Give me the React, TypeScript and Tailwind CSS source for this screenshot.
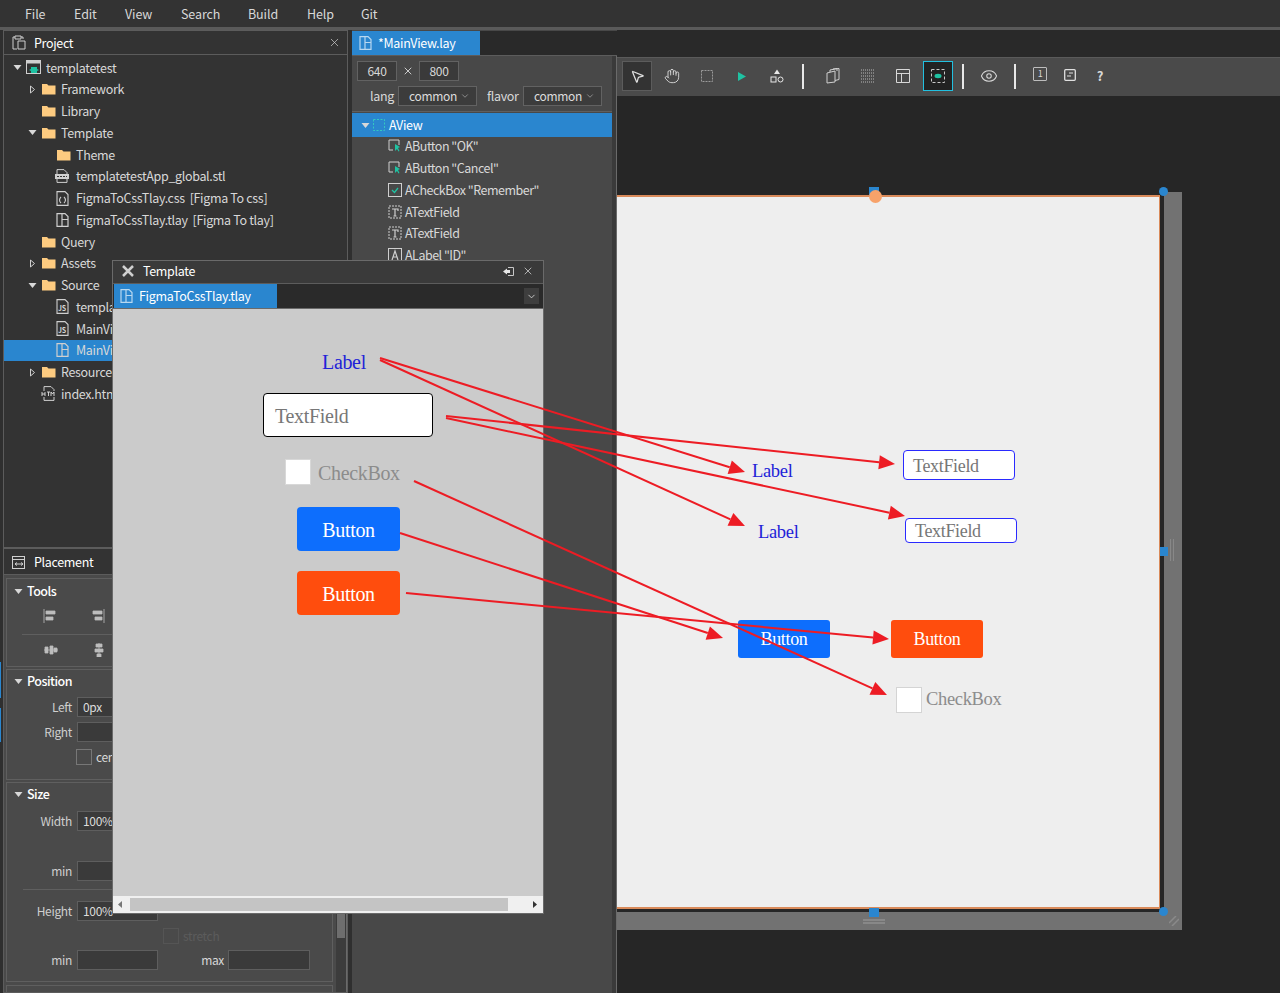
import React from "react";
import { Hand, MousePointer2, Eye, X, ChevronDown } from "lucide-react";

const C = "#cfcfcf";

function Tri({ open }: { open?: boolean }) {
  return open ? (
    <svg width="9" height="7" viewBox="0 0 9 7" className="shrink-0"><path d="M0.5 1h8L4.5 6z" fill="#d8d8d8" /></svg>
  ) : (
    <svg width="9" height="9" viewBox="0 0 9 9" className="shrink-0"><path d="M2.5 1v7L6.5 4.5z" fill="none" stroke="#d0d0d0" /></svg>
  );
}
function Folder() {
  return <svg width="14" height="12" viewBox="0 0 14 12" className="shrink-0 ml-[1px]"><path d="M0 1h5l1.5 1.6H13.500V11.500H0z" fill="#fdcb80" /></svg>;
}
function LayFile({ c = C }: { c?: string }) {
  return (
    <svg width="13" height="14" viewBox="0 0 13 14" className="shrink-0" fill="none" stroke={c} strokeWidth="1.200">
      <path d="M1 .6h8l3 3v9.800H1zM6 .6v12.800M6 6.500h6" />
    </svg>
  );
}
function JsFile() {
  return (
    <span className="relative w-[13px] h-[15px] shrink-0 block">
      <svg width="13" height="15" viewBox="0 0 13 15" fill="none" stroke={C} strokeWidth="1.100" className="absolute inset-0"><path d="M1 .6h8l3 3v10.800H1z" /></svg>
      <span className="absolute left-[2px] top-[5px] text-[7px] leading-[9px] font-bold text-[#d8d8d8]">JS</span>
    </span>
  );
}
function CssFile() {
  return (
    <svg width="13" height="15" viewBox="0 0 13 15" className="shrink-0" fill="none" stroke={C} strokeWidth="1.100">
      <path d="M1 .6h8l3 3v10.800H1zM5 6c-2 2-2 4 0 6M8 6c2 2 2 4 0 6" />
    </svg>
  );
}
function StlFile() {
  return (
    <svg width="14" height="14" viewBox="0 0 14 14" className="shrink-0 -ml-[1px]">
      <path d="M2 .6h7l3 3v9.800H2z" fill="none" stroke={C} />
      <rect x="0" y="5" width="14" height="5" fill={C} />
      <path d="M2 7.500h10" stroke="#333" strokeDasharray="2 1" />
    </svg>
  );
}
function HtmlFile() {
  return (
    <svg width="15" height="15" viewBox="0 0 15 15" className="shrink-0">
      <path d="M3 .6h7l3 3v10.800H3z" fill="none" stroke={C} />
      <rect x="0" y="5" width="15" height="6" fill="#333" />
      <path d="M1 6v4M1 8h3M4 6v4M6 6h3M7.500 6v4M10 10V6l1.500 2L13 6v4" stroke="#e0e0e0" fill="none" strokeWidth=".9" />
    </svg>
  );
}
function AppIcon() {
  return (
    <svg width="15" height="15" viewBox="0 0 15 15" className="shrink-0">
      <rect x=".5" y=".5" width="14" height="13" fill="none" stroke={C} />
      <rect x=".5" y=".5" width="14" height="3" fill={C} />
      <path d="M5 7h6v2l2 1-2 1v2H5v-2l-2-1 2-1z" fill="#1fc2a2" />
    </svg>
  );
}

type Row = { d: number; t: string; a?: "o" | "c"; i: React.ReactNode; sel?: boolean };
const rows: Row[] = [
  { d: 0, t: "templatetest", a: "o", i: <AppIcon /> },
  { d: 1, t: "Framework", a: "c", i: <Folder /> },
  { d: 1, t: "Library", i: <Folder /> },
  { d: 1, t: "Template", a: "o", i: <Folder /> },
  { d: 2, t: "Theme", i: <Folder /> },
  { d: 2, t: "templatetestApp_global.stl", i: <StlFile /> },
  { d: 2, t: "FigmaToCssTlay.css  [Figma To css]", i: <CssFile /> },
  { d: 2, t: "FigmaToCssTlay.tlay  [Figma To tlay]", i: <LayFile /> },
  { d: 1, t: "Query", i: <Folder /> },
  { d: 1, t: "Assets", a: "c", i: <Folder /> },
  { d: 1, t: "Source", a: "o", i: <Folder /> },
  { d: 2, t: "templatetestApp.js", i: <JsFile /> },
  { d: 2, t: "MainView.js", i: <JsFile /> },
  { d: 2, t: "MainView.lay", i: <LayFile />, sel: true },
  { d: 1, t: "Resource", a: "c", i: <Folder /> },
  { d: 1, t: "index.html", i: <HtmlFile /> },
];

function TreeRow({ r }: { r: Row }) {
  const left = r.d * 15 + 7;
  return (
    <div className={`h-[21.75px] flex items-center whitespace-pre ${r.sel ? "bg-[#2a86cf]" : ""}`}>
      <span className="w-[13px] flex justify-center shrink-0" style={{ marginLeft: left }}>
        {r.a === "o" ? <Tri open /> : r.a === "c" ? <Tri /> : null}
      </span>
      <span className="w-[20px] ml-[2px] flex justify-start shrink-0">{r.i}</span>
      <span>{r.t}</span>
    </div>
  );
}

function PanelHead({ title, icon, close, h = "h-[24px]" }: { title: string; icon: React.ReactNode; close?: boolean; h?: string }) {
  return (
    <div className={`${h} flex items-center pl-[8px] pr-[6px] border-b border-[#5c5c5c] shrink-0 text-white`}>
      <span className="w-[22px] flex">{icon}</span>
      <span>{title}</span>
      {close && <X size={13} strokeWidth={1.300} className="ml-auto text-[#d0d0d0]" />}
    </div>
  );
}

function Input({ v, w = "w-[81px]" }: { v?: string; w?: string }) {
  return <div className={`${w} h-[20px] bg-[#3a3a3a] border border-[#5e5e5e] text-[12px] leading-[18px] pl-[5px] text-[#dcdcdc] shrink-0`}>{v}</div>;
}

function Field({ label, v }: { label: string; v?: string }) {
  return (
    <div className="flex items-center h-[20px]">
      <span className="w-[65px] text-right text-[12px] mr-[5px] text-[#cfcfcf]">{label}</span>
      <Input v={v} />
    </div>
  );
}

function GroupHead({ t }: { t: string }) {
  return (
    <div className="flex items-center h-[20px] pl-[7px] gap-[4px] text-white font-medium">
      <Tri open />
      <span className="tracking-[-0.5px]">{t}</span>
    </div>
  );
}

function AlignIcon({ k }: { k: number }) {
  const p = [
    "M1 0v14M3 2h9v3H3zM3 8h7v3H3z",
    "M13 0v14M2 2h9v3H2zM4 8h7v3H4z",
    "M1 4h3v6H1zM6 3h3v8H6zM10 5h3v4h-3zM0 7h14",
    "M4 1h6v3H4zM3 6h8v3H3zM5 11h4v3H5zM7 0v14",
  ][k];
  return <svg width="14" height="14" viewBox="0 0 14 14"><path d={p} fill="#bdbdbd" stroke="#bdbdbd" strokeWidth=".8" /></svg>;
}

function CtrlIcon({ k }: { k: number }) {
  const teal = "#1fc2a2";
  return (
    <svg width="14" height="14" viewBox="0 0 14 14" className="shrink-0">
      {k === 0 && <><path d="M5 11H1V1h10v5" fill="none" stroke={C} /><path d="M7 5l5 3-2 1 1.500 3-1 .5L9 10l-2 2z" fill={teal} /></>}
      {k === 1 && <><rect x=".5" y=".5" width="13" height="13" fill="none" stroke={C} /><path d="M4 7l2.500 2.500L10 5" fill="none" stroke={teal} strokeWidth="1.300" /></>}
      {k === 2 && <><rect x="1" y="1" width="12" height="12" fill="none" stroke={C} strokeDasharray="2 1" /><path d="M4 4h6v2M7 4v7M5.500 11h3" fill="none" stroke={C} strokeWidth="1.200" /></>}
      {k === 3 && <><rect x=".5" y=".5" width="13" height="13" fill="none" stroke={C} /><path d="M4 12L7 3l3 9M5 9h4" fill="none" stroke={C} strokeWidth="1.200" /></>}
    </svg>
  );
}

function OutRow({ k, t }: { k: number; t: string }) {
  return (
    <div className="h-[21.75px] flex items-center pl-[36px] gap-[3px] whitespace-pre">
      <CtrlIcon k={k} />
      <span className="tracking-[-0.5px]">{t}</span>
    </div>
  );
}

function Sep() {
  return <div className="w-[2px] h-[25px] bg-[#e8e8e8] mx-[9px] shrink-0" />;
}
function Tool({ children, w = "w-[35px]" }: { children: React.ReactNode; w?: string }) {
  return <div className={`${w} h-[30px] flex items-center justify-center shrink-0`}>{children}</div>;
}

function Select({ w }: { w: string }) {
  return (
    <div className={`${w} h-[20px] border border-[#626262] bg-[#3c3c3c] flex items-center pl-[10px] gap-[3px] text-[12px] text-[#dcdcdc] shrink-0`}>
      <span>common</span>
      <ChevronDown size={10} className="text-[#999]" />
    </div>
  );
}

const ser = "font-['Liberation_Serif',serif]";

const arrows = [
  [380, 358, 745, 472],
  [380, 360, 745, 526],
  [446, 416, 895, 464],
  [446, 418, 905, 516],
  [414, 481, 887, 695],
  [400, 533, 723, 638],
  [406, 593, 889, 639],
];

function Arrows() {
  return (
    <svg width="1280" height="993" className="absolute left-0 top-0 pointer-events-none">
      {arrows.map(([x1, y1, x2, y2], i) => {
        const a = Math.atan2(y2 - y1, x2 - x1);
        const L = 16, W = 7;
        const bx = x2 - L * Math.cos(a), by = y2 - L * Math.sin(a);
        const px = -Math.sin(a) * W, py = Math.cos(a) * W;
        return (
          <g key={i}>
            <line x1={x1} y1={y1} x2={bx} y2={by} stroke="#ed1c24" strokeWidth="2" />
            <polygon points={`${x2},${y2} ${bx + px},${by + py} ${bx - px},${by - py}`} fill="#ed1c24" />
          </g>
        );
      })}
    </svg>
  );
}

function Handle({ cls }: { cls: string }) {
  return <div className={`absolute bg-[#2a86cf] ${cls}`} />;
}

function FloatingWindow() {
  return (
    <div className="absolute left-[112px] top-[260px] w-[432px] h-[654px] border border-[#6a6a6a] flex flex-col bg-[#cbcbcb]">
      <div className="h-[23px] bg-[#3a3a3a] border-b border-[#5c5c5c] flex items-center pl-[9px] pr-[9px] pb-[2px] text-white shrink-0">
        <svg width="12" height="12" viewBox="0 0 12 12" className="mr-[9px]"><path d="M1 1l10 10M11 1L1 11" stroke="#d0d0d0" strokeWidth="2.500" /></svg>
        <span>Template</span>
        <svg width="11" height="9" viewBox="0 0 11 9" className="ml-auto mr-[8px]"><path d="M5 .5h5.500v8H5" fill="none" stroke="#c8c8c8" /><path d="M0 4.500L4 1.500V3h3v3H4v1.500z" fill="#e8e8e8" /></svg>
        <X size={12} strokeWidth={1.500} className="text-[#d8d8d8]" />
      </div>
      <div className="h-[25px] bg-[#2a2a2a] flex shrink-0 border-b border-[#6a6a6a]">
        <div className="w-[163px] ml-[1px] bg-[#2a86cf] flex items-center pl-[6px] gap-[6px] text-white">
          <LayFile c="#b8d8f0" />
          <span>FigmaToCssTlay.tlay</span>
        </div>
        <div className="ml-auto mr-[4px] my-[4px] w-[15px] bg-[#3e3e3e] flex items-center justify-center">
          <ChevronDown size={11} className="text-[#d0d0d0]" />
        </div>
      </div>
      <div className="relative flex-1">
        <span className={`absolute left-[209px] top-[41px] text-[20px] leading-[24px] text-[#2222d8] ${ser}`}>Label</span>
        <div className={`absolute left-[150px] top-[84px] w-[170px] h-[44px] bg-white border border-black rounded-[4px] pl-[11px] text-[20px] leading-[44px] text-[#777] ${ser}`}>TextField</div>
        <div className="absolute left-[172px] top-[150px] w-[26px] h-[26px] bg-white border border-[#d8d8d8]" />
        <span className={`absolute left-[205px] top-[152px] text-[20px] leading-[24px] text-[#8c8c8c] ${ser}`}>CheckBox</span>
        <div className={`absolute left-[184px] top-[198px] w-[103px] h-[44px] bg-[#0d6efd] rounded-[4px] flex items-center justify-center pt-[2px] text-white text-[20px] ${ser}`}>Button</div>
        <div className={`absolute left-[184px] top-[262px] w-[103px] h-[44px] bg-[#ff4d0d] rounded-[4px] flex items-center justify-center pt-[2px] text-white text-[20px] ${ser}`}>Button</div>
      </div>
      <div className="h-[17px] bg-[#f0f0f0] flex items-center shrink-0">
        <svg width="17" height="9" viewBox="0 0 17 9"><path d="M9 1v7L5 4.500z" fill="#777" /></svg>
        <div className="w-[378px] h-[13px] bg-[#c4c4c4]" />
        <svg width="35" height="9" viewBox="0 0 35 9"><path d="M25 1v7l4-3.500z" fill="#333" /></svg>
      </div>
    </div>
  );
}

function Canvas() {
  return (
    <div className="relative flex-1 bg-[#262626]">
      <div className="absolute left-[547px] top-[96px] w-[18px] h-[738px] bg-[#727272]" />
      <div className="absolute left-0 top-[816px] w-[565px] h-[18px] bg-[#727272]" />
      <div className="absolute left-0 top-[99px] w-[543px] h-[714px] bg-[#eeeeee] border-t-2 border-r border-b-2 border-[#d98a5a]" />
      <Handle cls="left-[252px] top-[91px] w-[10px] h-[9px]" />
      <div className="absolute left-[252px] top-[94px] w-[13px] h-[13px] rounded-full bg-[#f7a26a]" />
      <Handle cls="left-[542px] top-[91px] w-[9px] h-[9px] rounded-full" />
      <Handle cls="left-[543px] top-[451px] w-[8px] h-[9px]" />
      <Handle cls="left-[252px] top-[812px] w-[10px] h-[9px]" />
      <Handle cls="left-[542px] top-[811px] w-[9px] h-[9px] rounded-full" />
      <div className="absolute left-[246px] top-[823px] w-[22px] h-[2px] bg-[#888]" />
      <div className="absolute left-[246px] top-[826px] w-[22px] h-[2px] bg-[#888]" />
      <div className="absolute left-[553px] top-[443px] w-[1px] h-[22px] bg-[#888]" />
      <div className="absolute left-[556px] top-[443px] w-[1px] h-[22px] bg-[#888]" />
      <svg width="10" height="10" viewBox="0 0 10 10" className="absolute left-[552px] top-[820px]"><path d="M0 7L7 0M3 10l7-7" stroke="#8a8a8a" strokeWidth="1.500" /></svg>
      <span className={`absolute left-[135px] top-[364px] text-[18.500px] leading-[22px] text-[#2222d8] ${ser}`}>Label</span>
      <div className={`absolute left-[286px] top-[354px] w-[112px] h-[30px] bg-white border border-[#2a2aff] rounded-[4px] pl-[9px] text-[18px] leading-[30px] text-[#777] ${ser}`}>TextField</div>
      <span className={`absolute left-[141px] top-[425px] text-[18.500px] leading-[22px] text-[#2222d8] ${ser}`}>Label</span>
      <div className={`absolute left-[288px] top-[422px] w-[112px] h-[25px] bg-white border border-[#2a2aff] rounded-[4px] pl-[9px] text-[18px] leading-[25px] text-[#777] ${ser}`}>TextField</div>
      <div className={`absolute left-[121px] top-[524px] w-[92px] h-[38px] bg-[#0d6efd] rounded-[3px] flex items-center justify-center text-white text-[18px] ${ser}`}>Button</div>
      <div className={`absolute left-[274px] top-[524px] w-[92px] h-[38px] bg-[#ff4d0d] rounded-[3px] flex items-center justify-center text-white text-[18px] ${ser}`}>Button</div>
      <div className="absolute left-[279px] top-[591px] w-[26px] h-[26px] bg-white border border-[#d4d4d4]" />
      <span className={`absolute left-[309px] top-[592px] text-[18.500px] leading-[22px] text-[#8c8c8c] ${ser}`}>CheckBox</span>
    </div>
  );
}

export default function App() {
  return (
    <div className="relative w-[1280px] h-[993px] overflow-hidden bg-[#333333] text-[12.5px] leading-[18px] text-[#d8d8d8] font-['Noto_Sans_CJK_KR','Noto_Sans',sans-serif] tracking-[-0.33px]">
      <div className="h-[27px] bg-[#333333] flex items-center pl-[25px] tracking-[-0.1px]">
        {[["File", 49], ["Edit", 51], ["View", 56], ["Search", 67], ["Build", 59], ["Help", 54], ["Git", 40]].map(([t, w]) => (
          <span key={t as string} style={{ width: w as number }}>{t}</span>
        ))}
      </div>
      <div className="h-[3px] bg-[#5a5a5a]" />
      <div className="flex h-[963px]">
        <div className="w-[352px] shrink-0 flex flex-col pl-[3px] pr-[4px] bg-[#2f2f2f]">
          <div className="h-[518px] bg-[#333333] border border-[#5c5c5c] flex flex-col overflow-hidden shrink-0">
            <PanelHead title="Project" close icon={
              <svg width="14" height="15" viewBox="0 0 14 15"><path d="M3 2H1v12h4M9 2h2v2M3 1h6v3H3zM6 6h7v8H6z" fill="none" stroke={C} /></svg>
            } />
            <div className="pt-[1.750px]">
              {rows.map((r, i) => <TreeRow key={i} r={r} />)}
            </div>
          </div>
          <div className="h-[445px] bg-[#4a4a4a] border border-[#5c5c5c] flex flex-col overflow-hidden shrink-0">
            <div className="bg-[#333333] pt-[1px]">
              <PanelHead title="Placement" h="h-[25px]" icon={
                <svg width="14" height="13" viewBox="0 0 14 13"><rect x=".5" y=".5" width="12" height="12" fill="none" stroke={C} /><path d="M1 3.500h12M3 8h8M3 8l2-1.500M3 8l2 1.500M11 8L9 6.500M11 8L9 9.500" fill="none" stroke={C} /></svg>
              } />
            </div>
            <div className="flex flex-1 pl-[2px] pr-[1px] pt-[3px] gap-[3px] min-h-0">
              <div className="flex flex-col w-[327px] shrink-0 gap-[2px]">
                <div className="h-[89px] border border-[#5f5f5f] pt-[2px] shrink-0">
                  <GroupHead t="Tools" />
                  <div className="flex items-center pl-[36px] gap-[34px] h-[29px] mb-[4px]"><AlignIcon k={0} /><AlignIcon k={1} /></div>
                  <div className="ml-[15px] border-t border-[#5f5f5f] flex items-center pl-[22px] gap-[34px] h-[31px]"><AlignIcon k={2} /><AlignIcon k={3} /></div>
                </div>
                <div className="h-[111px] border border-[#5f5f5f] pt-[1px] flex flex-col shrink-0">
                  <GroupHead t="Position" />
                  <div className="mt-[6px]"><Field label="Left" v="0px" /></div>
                  <div className="mt-[5px]"><Field label="Right" /></div>
                  <div className="mt-[7px] flex items-center h-[16px] pl-[69px] gap-[4px] text-[12px]"><span className="w-[16px] h-[16px] border border-[#777]" />center</div>
                </div>
                <div className="h-[200px] border border-[#5f5f5f] pt-[1px] flex flex-col shrink-0">
                  <GroupHead t="Size" />
                  <div className="mt-[7px]"><Field label="Width" v="100%" /></div>
                  <div className="mt-[30px]"><Field label="min" /></div>
                  <div className="ml-[16px] mt-[8px] border-t border-[#5f5f5f]" />
                  <div className="mt-[11px]"><Field label="Height" v="100%" /></div>
                  <div className="mt-[6px] pl-[156px] flex items-center h-[18px] gap-[4px] text-[12px] text-[#5c5c5c]">
                    <span className="w-[16px] h-[16px] border border-[#555]" />stretch
                  </div>
                  <div className="mt-[5px] flex items-center">
                    <Field label="min" />
                    <span className="w-[66px] text-right text-[12px] mr-[4px]">max</span>
                    <Input w="w-[82px]" />
                  </div>
                </div>
                <div className="h-[20px] mt-[1px] border border-[#5f5f5f] shrink-0" />
              </div>
              <div className="w-[11px] bg-[#3c3c3c] border-r border-[#6a6a6a] relative shrink-0">
                <div className="absolute left-[1px] top-[320px] w-[8px] h-[40px] bg-[#6e6e6e]" />
              </div>
            </div>
          </div>
        </div>
        <div className="w-[265px] shrink-0 flex flex-col bg-[#484848]">
          <div className="h-[25px] bg-[#292929] border-b border-[#5c5c5c] flex shrink-0 mt-[1px]">
            <div className="w-[128px] bg-[#2a86cf] flex items-center pl-[7px] gap-[6px] text-white">
              <LayFile c="#b8d8f0" />
              <span>*MainView.lay</span>
            </div>
          </div>
          <div className="flex flex-1 min-h-0">
            <div className="w-[260px] shrink-0 flex flex-col">
              <div className="h-[56px] border-b border-[#5f5f5f] pt-[5px] pl-[5px] shrink-0">
                <div className="flex items-center h-[20px] text-[12px]">
                  <div className="w-[40px] h-[20px] bg-[#3a3a3a] border border-[#626262] text-center leading-[18px]">640</div>
                  <X size={12} className="mx-[5px] text-[#ccc]" />
                  <div className="w-[40px] h-[20px] bg-[#3a3a3a] border border-[#626262] text-center leading-[18px]">800</div>
                </div>
                <div className="flex items-center h-[20px] mt-[5px]">
                  <span className="ml-[13px] w-[24px] mr-[4px]">lang</span>
                  <Select w="w-[79px]" />
                  <span className="ml-[10px] w-[32px] mr-[4px]">flavor</span>
                  <Select w="w-[79px]" />
                </div>
              </div>
              <div className="h-[24px] mt-[1px] bg-[#2a86cf] flex items-center pl-[9px] gap-[3px] text-white shrink-0">
                <Tri open />
                <svg width="12" height="12" viewBox="0 0 12 12" className="mr-[1px]"><rect x=".5" y=".5" width="11" height="11" fill="none" stroke="#35c8c0" strokeDasharray="2 1.500" /></svg>
                <span>AView</span>
              </div>
              <div className="-mt-[1.500px]">
                <OutRow k={0} t={'AButton "OK"'} />
                <OutRow k={0} t={'AButton "Cancel"'} />
                <OutRow k={1} t={'ACheckBox "Remember"'} />
                <OutRow k={2} t="ATextField" />
                <OutRow k={2} t="ATextField" />
                <OutRow k={3} t={'ALabel "ID"'} />
              </div>
            </div>
            <div className="w-[5px] bg-[#3a3a3a] border-r border-[#6a6a6a]" />
          </div>
        </div>
        <div className="flex-1 flex flex-col min-w-0 relative">
          <div className="h-[27px] bg-[#292929] shrink-0" />
          <div className="relative h-[39px] bg-[#4a4a4a] border-t border-[#5a5a5a] flex items-center pl-[5px] pb-[2px] shrink-0">
            <div className="w-[30px] h-[30px] bg-[#333333] border border-[#5c5c5c] flex items-center justify-center shrink-0">
              <MousePointer2 size={15} className="text-[#e0e0e0]" />
            </div>
            <div className="ml-[2px] flex items-center">
              <Tool><Hand size={16} strokeWidth={1.400} className="text-[#d8d8d8]" /></Tool>
              <Tool><svg width="12" height="12" viewBox="0 0 12 12"><rect x=".5" y=".5" width="11" height="11" fill="none" stroke="#9a9a9a" strokeDasharray="2 1" /></svg></Tool>
              <Tool><svg width="8" height="9" viewBox="0 0 8 9"><path d="M0 0l8 4.500L0 9z" fill="#1fc2a2" /></svg></Tool>
              <Tool><svg width="14" height="14" viewBox="0 0 14 14"><path d="M7 .5l3 4.500H4z" fill="#e8e8e8" /><rect x="1" y="8" width="5" height="5" fill="none" stroke="#e8e8e8" /><circle cx="10.500" cy="10.500" r="2.500" fill="none" stroke="#e8e8e8" /></svg></Tool>
            </div>
            <div className="-ml-[1px]"><Sep /></div>
            <div className="flex items-center ml-[2px]">
              <Tool><svg width="14" height="16" viewBox="0 0 14 16"><path d="M1 5l8-2v11l-8 1zM4 4V2l7-1.500V3M7 2V1l6-.5v11l-4 1" fill="none" stroke="#cfcfcf" /></svg></Tool>
              <Tool><svg width="14" height="14" viewBox="0 0 14 14"><path d="M0 1h14M0 4h14M0 7h14M0 10h14M0 13h14" stroke="#b8b8b8" strokeDasharray="1 1" /></svg></Tool>
              <Tool w="w-[36px]"><svg width="14" height="14" viewBox="0 0 14 14"><path d="M.5.5h13v13H.5zM.5 4.500h13M5.500 4.500v9" fill="none" stroke="#d8d8d8" /></svg></Tool>
            </div>
            <div className="w-[30px] h-[30px] bg-[#222222] border border-[#22c0e0] flex items-center justify-center ml-[2px] shrink-0">
              <svg width="14" height="14" viewBox="0 0 14 14"><rect x=".5" y=".5" width="13" height="13" fill="none" stroke="#c8c8c8" strokeDasharray="3 2" /><ellipse cx="7" cy="7" rx="3.500" ry="2.200" fill="#1fc2a2" /></svg>
            </div>
            <Sep />
            <Tool w="w-[32px]"><Eye size={18} strokeWidth={1.400} className="text-[#d8d8d8]" /></Tool>
            <Sep />
            <div className="flex items-center">
              <Tool w="w-[30px]"><div className="w-[14px] h-[14px] border border-[#bdbdbd] rounded-[1px] text-[9px] leading-[12px] text-center -mt-[4px] text-[#d8d8d8]">1</div></Tool>
              <Tool w="w-[30px]"><svg width="12" height="12" viewBox="0 0 12 12" className="-mt-[2px]"><rect x=".7" y=".7" width="10.600" height="10.600" rx="1" fill="none" stroke="#e0e0e0" strokeWidth="1.300" /><path d="M5 4h4M3 7h4" stroke="#e0e0e0" /></svg></Tool>
              <Tool w="w-[30px]"><span className="font-bold text-[#d8d8d8] text-[13px]">?</span></Tool>
            </div>
          </div>
          <Canvas />
        </div>
      </div>
      <div className="absolute left-0 top-[662px] w-[1px] h-[36px] bg-[#2a86cf]" />
      <div className="absolute left-0 top-[708px] w-[1px] h-[34px] bg-[#2a86cf]" />
      <FloatingWindow />
      <Arrows />
    </div>
  );
}
